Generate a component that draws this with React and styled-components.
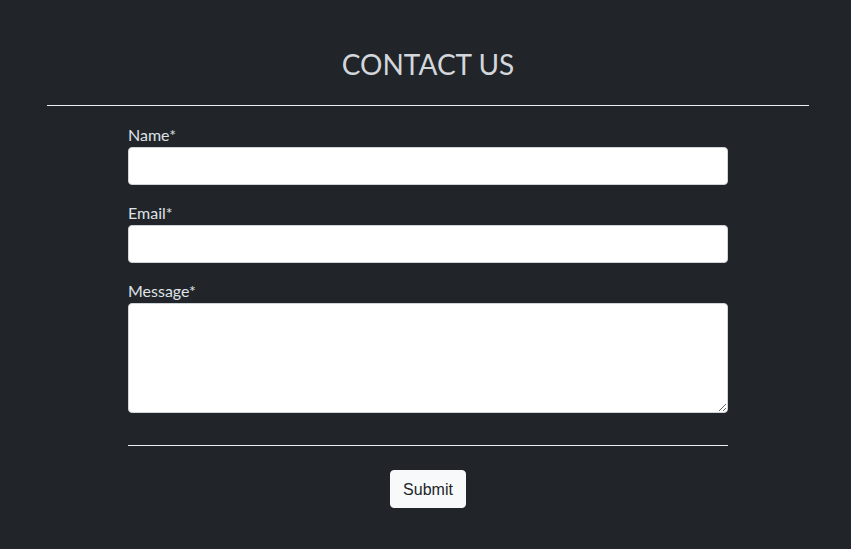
import React from "react";
import styled, { createGlobalStyle } from "styled-components";

const Global = createGlobalStyle`
  html, body { margin: 0; padding: 0; background: #212529; }
  body { font-family: Lato, "Noto Sans", sans-serif; }
  * { box-sizing: border-box; }
`;

const Page = styled.main`
  min-height: 549px;
  background: #212529;
  padding: 46px 42px 0 47px;
`;

const Title = styled.h2`
  margin: 0;
  font-size: 28px;
  line-height: 36px;
  font-weight: 400;
  color: #d3d7dc;
  text-align: center;
`;

const Rule = styled.hr`
  margin: ${(p) => p.$m};
  border: 0;
  border-top: 1px solid #eceef0;
`;

const Form = styled.form`
  width: 600px;
  margin: 0 auto;
  display: flex;
  flex-direction: column;
  gap: 17px;
`;

const Group = styled.div`
  display: flex;
  flex-direction: column;
`;

const Label = styled.label`
  font-size: 16px;
  line-height: 21px;
  padding-bottom: 2px;
  color: #dee2e6;
`;

const Input = styled.input`
  height: 38px;
  width: 100%;
  background: #fff;
  border: 1px solid #ced4da;
  border-radius: 4px;
  padding: 6px 12px;
  font: inherit;
`;

const Area = styled.textarea`
  height: 110px;
  width: 100%;
  background: #fff;
  border: 1px solid #ced4da;
  border-radius: 4px;
  padding: 6px 12px;
  font: inherit;
  resize: vertical;
  display: block;
`;

const Actions = styled.div`
  display: flex;
  justify-content: center;
`;

const Button = styled.button`
  height: 38px;
  padding: 1px 12px 0;
  background: #f8f9fa;
  border: 1px solid #f8f9fa;
  border-radius: 4px;
  font-family: "Liberation Sans", Arial, sans-serif;
  font-size: 16px;
  color: #212529;
  cursor: pointer;
`;

export default function App() {
  return (
    <>
      <Global />
      <Page>
        <Title>CONTACT US</Title>
        <Rule $m="23px 0 18px" />
        <Form onSubmit={(e) => e.preventDefault()}>
          <Group>
            <Label htmlFor="name">Name*</Label>
            <Input id="name" type="text" />
          </Group>
          <Group>
            <Label htmlFor="email">Email*</Label>
            <Input id="email" type="email" />
          </Group>
          <Group>
            <Label htmlFor="message">Message*</Label>
            <Area id="message" />
          </Group>
          <Rule $m="15px 0 7px" />
          <Actions>
            <Button type="submit">Submit</Button>
          </Actions>
        </Form>
      </Page>
    </>
  );
}
